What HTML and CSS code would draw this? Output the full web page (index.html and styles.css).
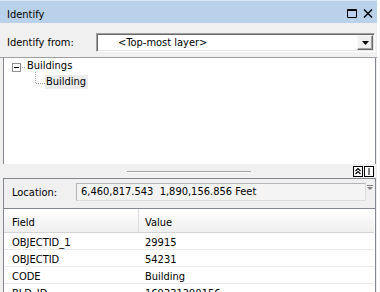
FILE: index.html
```html
<!DOCTYPE html>
<html lang="en">
<head>
    <meta charset="UTF-8">
    <meta name="viewport" content="width=device-width, initial-scale=1.0">
    <title>Identify</title>
    <link rel="stylesheet" href="styles.css">
</head>
<body>
    <div class="window">
        <div class="titlebar">
            <span class="title">Identify</span>
            <span class="caption-btns">
                <svg width="10" height="9" viewBox="0 0 10 9"><path d="M0.5 0.5h9v8h-9z M0 1.5h10" fill="none" stroke="#000"/></svg>
                <svg width="10" height="9" viewBox="0 0 10 9"><path d="M1 0.5l8 8M9 0.5l-8 8" fill="none" stroke="#000" stroke-width="1.4"/></svg>
            </span>
        </div>

        <div class="from-row">
            <span class="from-label">Identify from:</span>
            <div class="combo">
                <span class="combo-text">&lt;Top-most layer&gt;</span>
                <span class="combo-btn">
                    <svg width="7" height="4" viewBox="0 0 7 4"><path d="M0 0h7L3.5 4z" fill="#000"/></svg>
                </span>
            </div>
        </div>

        <div class="tree">
            <div class="tree-row root">
                <svg class="expander" width="14" height="9" viewBox="0 0 14 9">
                    <rect x="0.5" y="0.5" width="8" height="8" fill="#fff" stroke="#919191"/>
                    <path d="M2 4.5h5" stroke="#000"/>
                    <path d="M10 4.5h4" stroke="#a0a0a0" stroke-dasharray="1 1"/>
                </svg>
                <span class="node">Buildings</span>
            </div>
            <div class="tree-row child">
                <svg class="connector" width="10" height="12" viewBox="0 0 10 12">
                    <path d="M0.5 0V12M1 11.5H10" stroke="#a0a0a0" stroke-dasharray="1 1"/>
                </svg>
                <span class="node sel">Building</span>
            </div>
        </div>

        <div class="splitter">
            <div class="grip"></div>
            <div class="split-btns">
                <svg width="10" height="11" viewBox="0 0 10 11">
                    <rect x="0.5" y="0.5" width="9" height="10" fill="#fff" stroke="#000"/>
                    <path d="M2.5 5L5 2.5L7.5 5M2.5 8L5 5.5L7.5 8" fill="none" stroke="#000" stroke-width="1.2"/>
                </svg>
                <svg width="10" height="11" viewBox="0 0 10 11">
                    <rect x="0.5" y="0.5" width="9" height="10" fill="#fff" stroke="#000"/>
                    <path d="M5 2v7" stroke="#000"/>
                </svg>
            </div>
        </div>

        <div class="lower">
            <div class="location">
                <span class="loc-label">Location:</span>
                <div class="loc-field">6,460,817.543&nbsp;&nbsp;1,890,156.856 Feet</div>
                <svg class="loc-icon" width="6" height="6" viewBox="0 0 6 6"><path d="M0 0.5h6" stroke="#808080"/><path d="M0 2h6L3 5z" fill="#808080"/></svg>
            </div>

            <div class="grid">
                <div class="grid-head">
                    <div class="cell">Field</div>
                    <div class="cell">Value</div>
                </div>
                <div class="grid-row"><div class="cell">OBJECTID_1</div><div class="cell">29915</div></div>
                <div class="grid-row"><div class="cell">OBJECTID</div><div class="cell">54231</div></div>
                <div class="grid-row"><div class="cell">CODE</div><div class="cell">Building</div></div>
                <div class="grid-row"><div class="cell">BLD_ID</div><div class="cell">169331390156</div></div>
            </div>
        </div>
    </div>
</body>
</html>
```

FILE: styles.css
```css
html, body { margin: 0; padding: 0; overflow: hidden; }
body { background: #fff; font-family: "DejaVu Sans Condensed", "DejaVu Sans", sans-serif; font-size: 11px; color: #000; }
.window { width: 377px; height: 292px; background: #f0f0f0; overflow: hidden; }

.titlebar { display: flex; align-items: flex-start; height: 23px; box-sizing: border-box; padding: 7px 4px 0 7px; background: #b9d1ea; border-top: 1px solid #d9e6f3; }
.title { line-height: 13px; }
.caption-btns { margin-left: auto; margin-top: 1px; display: flex; gap: 6px; }

.from-row { display: flex; align-items: flex-start; height: 35px; box-sizing: border-box; padding: 10px 2px 0 7px; border-bottom: 1px solid #a0a0a0; }
.from-label { line-height: 13px; margin-top: 3px; }
.combo { margin-left: auto; width: 279px; height: 19px; box-sizing: border-box; display: flex; align-items: center; background: #fff; border: 1px solid; border-color: #a0a0a0 #fff #fff #a0a0a0; box-shadow: inset 1px 1px 0 #696969, inset -1px -1px 0 #e3e3e3; }
.combo-text { flex: 1; padding-left: 21px; line-height: 13px; }
.combo-btn { width: 16px; height: 15px; box-sizing: border-box; margin-right: 1px; display: flex; align-items: center; justify-content: center; background: #f0f0f0; border: 1px solid; border-color: #f8f8f8 #696969 #696969 #f8f8f8; box-shadow: inset -1px -1px 0 #a0a0a0; }

.tree { height: 106px; box-sizing: border-box; margin: 0 1px 0 3px; padding-top: 1px; background: #fff; border-left: 1px solid #828790; border-right: 1px solid #828790; }
.tree-row { display: flex; align-items: flex-start; }
.tree-row.root { height: 16px; padding-left: 8px; }
.tree-row.child { padding-left: 31px; }
.expander { margin-top: 4px; }
.connector { margin-top: -3px; }
.node { line-height: 13px; margin-left: 1px; }
.sel { margin-left: 0; line-height: 14px; padding: 0 2px 0 1px; background: #ececec; }

.splitter { height: 14px; display: flex; align-items: flex-start; padding-right: 3px; }
.grip { margin: 7px 0 0 127px; width: 124px; border-top: 1px solid #a0a0a0; border-bottom: 1px solid #fff; }
.split-btns { margin: 2px 0 0 auto; display: flex; gap: 1px; }

.lower { margin: 0 1px 0 3px; border: 1px solid #828790; border-bottom: none; }
.location { display: flex; align-items: flex-start; height: 29px; padding-left: 8px; }
.loc-label { width: 64px; line-height: 13px; margin-top: 7px; }
.loc-field { width: 290px; height: 18px; box-sizing: border-box; margin-top: 4px; padding-left: 4px; line-height: 16px; background: #f4f4f4; border: 1px solid; border-color: #b5b5b5 #dcdcdc #dcdcdc #b5b5b5; }
.loc-icon { margin: 6px 0 0 1px; }

.grid { border-top: 1px solid #828790; background: #fff; }
.grid-head { display: grid; grid-template-columns: 135px 1fr; height: 24px; box-sizing: border-box; background: linear-gradient(#ffffff, #efefef); border-bottom: 1px solid #d5d5d5; margin-right: 1px; }
.grid-head .cell { padding-top: 7px; line-height: 13px; }
.grid-head .cell:first-child { border-right: 1px solid #dcdcdc; }
.grid-row { display: grid; grid-template-columns: 135px 1fr; height: 17px; box-sizing: border-box; padding-top: 3px; line-height: 13px; border-bottom: 1px solid #e8e8e8; margin-right: 1px; }
.cell { box-sizing: border-box; padding-left: 6px; white-space: nowrap; }
.cell:first-child { padding-left: 8px; }
```
